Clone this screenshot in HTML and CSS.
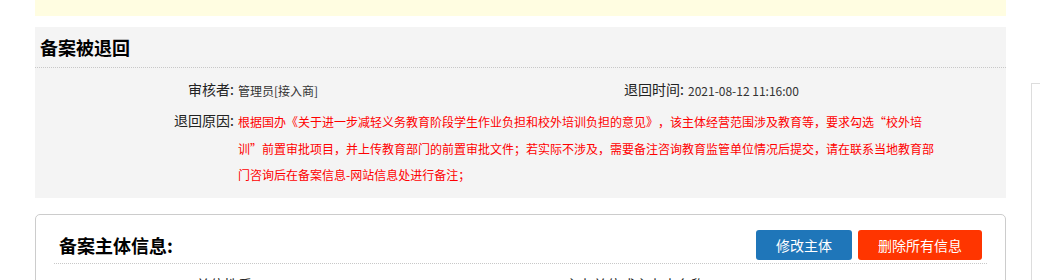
FILE: index.html
```html
<!DOCTYPE html>
<html lang="zh-CN">
<head>
<meta charset="utf-8">
<title>备案被退回</title>
<link rel="stylesheet" href="styles.css">
</head>
<body>
<div class="page">
  <div class="main">
    <div class="notice"></div>
    <section class="reject">
      <h2 class="reject-title">备案被退回</h2>
      <div class="reject-body">
        <div class="info-row">
          <span class="label">审核者:</span>
          <span class="value">管理员[接入商]</span>
          <span class="label">退回时间:</span>
          <span class="value">2021-08-12 11:16:00</span>
        </div>
        <div class="info-row">
          <span class="label">退回原因:</span>
          <span class="reason">根据国办《关于进一步减轻义务教育阶段学生作业负担和校外培训负担的意见》，该主体经营范围涉及教育等，要求勾选“校外培训”前置审批项目，并上传教育部门的前置审批文件；若实际不涉及，需要备注咨询教育监管单位情况后提交，请在联系当地教育部门咨询后在备案信息-网站信息处进行备注；</span>
        </div>
      </div>
    </section>
    <section class="card">
      <div class="card-head">
        <h2 class="card-title">备案主体信息:</h2>
        <div class="actions">
          <button class="btn btn-blue" type="button">修改主体</button>
          <button class="btn btn-red" type="button">删除所有信息</button>
        </div>
      </div>
      <div class="card-row">
        <span class="field-label">单位性质:</span>
        <span class="field-value"></span>
        <span class="field-label field-label-2">主办单位或主办人名称:</span>
        <span class="field-value"></span>
      </div>
    </section>
  </div>
  <aside class="side"></aside>
</div>
</body>
</html>
```

FILE: styles.css
```css
* {
  box-sizing: border-box;
}

html, body {
  margin: 0;
  padding: 0;
  background: #fff;
}

body {
  font-family: "Noto Sans CJK SC", "Noto Sans", sans-serif;
  color: #222;
  overflow: hidden;
  height: 280px;
  text-spacing-trim: space-all;
}

.page {
  display: flex;
  align-items: flex-start;
}

.main {
  width: 971px;
  margin-left: 35px;
  flex: none;
}

.notice {
  height: 16px;
  background: #fffde1;
}

.reject {
  margin-top: 11px;
  background: #f4f4f4;
  padding-bottom: 9px;
}

.reject-title {
  margin: 0;
  padding: 0 5px;
  height: 41px;
  line-height: 40px;
  font-size: 18px;
  font-weight: bold;
  color: #000;
  border-bottom: 1px dotted #c8c8c8;
}

.reject-body {
  padding-top: 10px;
  display: flex;
  flex-direction: column;
  gap: 5px;
}

.info-row {
  display: grid;
  grid-template-columns: 200px 250px 200px 1fr;
  align-items: start;
}

.label {
  text-align: right;
  font-size: 14px;
  line-height: 22px;
  color: #222;
  padding-right: 1px;
}

.value {
  font-size: 12px;
  line-height: 26px;
  color: #333;
  padding-left: 3px;
}

.reason {
  grid-column: 2 / 5;
  width: 700px;
  padding-left: 3px;
  font-size: 12px;
  line-height: 26.5px;
  color: #ff0000;
  text-spacing-trim: space-all;
}

.card {
  margin-top: 16px;
  border: 1px solid #cccccc;
  border-radius: 5px;
  height: 120px;
}

.card-head {
  margin: 0 18px;
  padding: 15px 5px 3px;
  display: flex;
  align-items: center;
  justify-content: space-between;
  border-bottom: 1px dotted #c8c8c8;
}

.card-title {
  margin: 0;
  font-size: 18px;
  font-weight: bold;
  color: #000;
  line-height: 30px;
}

.actions {
  display: flex;
  gap: 6px;
}

.btn {
  height: 30px;
  padding: 0 20px;
  border: none;
  border-radius: 3px;
  color: #fff;
  font-family: inherit;
  font-size: 14px;
  line-height: 30px;
  cursor: pointer;
}

.btn-blue {
  background: #1f76b9;
}

.btn-red {
  background: #ff3500;
}

.card-row {
  display: grid;
  grid-template-columns: 220px 309px 160px 1fr;
  padding-top: 10px;
  font-size: 14px;
  line-height: 20px;
}

.field-label {
  text-align: right;
  color: #222;
}

.field-label-2 {
  text-align: left;
}

.side {
  flex: 1;
  margin-left: 25px;
  margin-top: 83px;
  height: 300px;
  border-left: 1px solid #dddddd;
  border-top: 1px solid #dddddd;
}
```
